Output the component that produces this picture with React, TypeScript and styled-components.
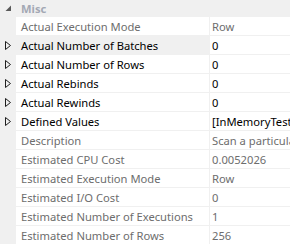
import React from "react";
import styled, { createGlobalStyle } from "styled-components";

const Global = createGlobalStyle`
  *, *::before, *::after { box-sizing: border-box; }
  html, body { margin: 0; padding: 0; background: #ffffff; }
  body { font-family: "Noto Sans", "Open Sans", sans-serif; font-size: 11.2px; }
`;

const Grid = styled.div`
  width: 290px;
  height: 244px;
  overflow: hidden;
  display: flex;
  flex-direction: column;
  background: #ffffff;
`;

const Category = styled.div`
  display: flex;
  align-items: center;
  height: 17px;
  background: #f0f0f0;
  flex: none;
`;

const Gutter = styled.div`
  width: 16px;
  flex: none;
  align-self: stretch;
  display: flex;
  align-items: center;
  justify-content: center;
  background: #f0f0f0;
`;

const CategoryTitle = styled.span`
  padding-left: 5px;
  font-weight: bold;
  color: #a3a8b4;
  line-height: 17px;
`;

const Row = styled.div`
  display: flex;
  height: 19px;
  flex: none;
`;

const Cell = styled.div<{ $selected?: boolean; $dim?: boolean }>`
  display: flex;
  align-items: center;
  height: 19px;
  border-bottom: 1px solid #f0f0f0;
  white-space: nowrap;
  overflow: hidden;
  color: ${(p) => (p.$dim ? "#6d6d6d" : "#000000")};
  background: ${(p) => (p.$selected ? "#f0f0f0" : "#ffffff")};
`;

const NameCell = styled(Cell)`
  width: 194px;
  flex: none;
  padding-left: 5px;
  border-right: 1px solid #f0f0f0;
`;

const ValueCell = styled(Cell)`
  flex: 1;
  padding-left: 2px;
`;

const Collapse = () => (
  <svg width="7" height="7" viewBox="0 0 7 7">
    <polygon points="6,0.5 6,6 0.5,6" fill="#595959" />
  </svg>
);

const Expand = () => (
  <svg width="6" height="9" viewBox="0 0 6 9">
    <polygon points="0.5,0.5 5.5,4.5 0.5,8.5" fill="none" stroke="#1e1e1e" strokeWidth="1" />
  </svg>
);

type Prop = { name: string; value: string; expandable?: boolean; dim?: boolean; selected?: boolean };

const props: Prop[] = [
  { name: "Actual Execution Mode", value: "Row", dim: true },
  { name: "Actual Number of Batches", value: "0", expandable: true, selected: true },
  { name: "Actual Number of Rows", value: "0", expandable: true },
  { name: "Actual Rebinds", value: "0", expandable: true },
  { name: "Actual Rewinds", value: "0", expandable: true },
  { name: "Defined Values", value: "[InMemoryTest].[dbo].[T1].[c1]", expandable: true },
  { name: "Description", value: "Scan a particular range of rows", dim: true },
  { name: "Estimated CPU Cost", value: "0.0052026", dim: true },
  { name: "Estimated Execution Mode", value: "Row", dim: true },
  { name: "Estimated I/O Cost", value: "0", dim: true },
  { name: "Estimated Number of Executions", value: "1", dim: true },
  { name: "Estimated Number of Rows", value: "256", dim: true },
];

export default function App() {
  return (
    <>
      <Global />
      <Grid>
        <Category>
          <Gutter>
            <Collapse />
          </Gutter>
          <CategoryTitle>Misc</CategoryTitle>
        </Category>
        {props.map((p) => (
          <Row key={p.name}>
            <Gutter>{p.expandable ? <Expand /> : null}</Gutter>
            <NameCell $dim={p.dim} $selected={p.selected}>{p.name}</NameCell>
            <ValueCell $dim={p.dim}>{p.value}</ValueCell>
          </Row>
        ))}
      </Grid>
    </>
  );
}
